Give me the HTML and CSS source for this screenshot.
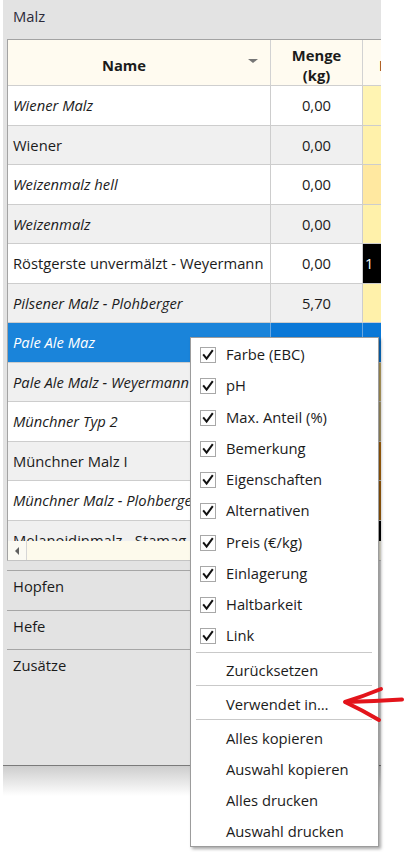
FILE: index.html
```html
<!DOCTYPE html>
<html lang="de">
<head>
<meta charset="utf-8">
<title>Malz</title>
<link rel="stylesheet" href="styles.css">
</head>
<body>
<div class="window">
  <div class="group-title">Malz</div>
  <div class="grid">
    <div class="head">
      <div class="hcell h-name"><span>Name</span><span class="sort"></span></div>
      <div class="hcell h-qty"><span>Menge<br>(kg)</span></div>
      <div class="hcell h-col3"><span>Farbe</span></div>
    </div>
    <div class="rows">
      <div class="row"><div class="cell c-name it">Wiener Malz</div><div class="cell c-qty">0,00</div><div class="cell c-col3 ebc-a"></div></div>
      <div class="row alt"><div class="cell c-name">Wiener</div><div class="cell c-qty">0,00</div><div class="cell c-col3 ebc-b"></div></div>
      <div class="row"><div class="cell c-name it">Weizenmalz hell</div><div class="cell c-qty">0,00</div><div class="cell c-col3 ebc-c"></div></div>
      <div class="row alt"><div class="cell c-name it">Weizenmalz</div><div class="cell c-qty">0,00</div><div class="cell c-col3 ebc-b"></div></div>
      <div class="row"><div class="cell c-name">Röstgerste unvermälzt - Weyermann</div><div class="cell c-qty">0,00</div><div class="cell c-col3 ebc-black">1</div></div>
      <div class="row alt"><div class="cell c-name it">Pilsener Malz - Plohberger</div><div class="cell c-qty">5,70</div><div class="cell c-col3 ebc-b"></div></div>
      <div class="row sel"><div class="cell c-name it">Pale Ale Maz</div><div class="cell c-qty">5,00</div><div class="cell c-col3"></div></div>
      <div class="row alt"><div class="cell c-name it">Pale Ale Malz - Weyermann</div><div class="cell c-qty">0,00</div><div class="cell c-col3 ebc-d"></div></div>
      <div class="row"><div class="cell c-name it">Münchner Typ 2</div><div class="cell c-qty">0,00</div><div class="cell c-col3 ebc-e"></div></div>
      <div class="row alt"><div class="cell c-name">Münchner Malz I</div><div class="cell c-qty">0,00</div><div class="cell c-col3 ebc-f"></div></div>
      <div class="row"><div class="cell c-name it">Münchner Malz - Plohberger</div><div class="cell c-qty">0,00</div><div class="cell c-col3 ebc-g"></div></div>
      <div class="row alt"><div class="cell c-name">Melanoidinmalz - Stamag</div><div class="cell c-qty">0,00</div><div class="cell c-col3 ebc-black"></div></div>
    </div>
    <div class="hscroll">
      <div class="sbtn"><span class="tri-left"></span></div>
      <div class="track"></div>
    </div>
  </div>
  <div class="sections">
    <div class="section">Hopfen</div>
    <div class="section">Hefe</div>
    <div class="section">Zusätze</div>
  </div>
</div>
<div class="window-shadow"></div>

<div class="menu">
  <div class="mi check"><span class="cb"><svg viewBox="0 0 14 14"><path d="M2.8 7.2 L5.6 10.6 L11.2 3"/></svg></span>Farbe (EBC)</div>
  <div class="mi check"><span class="cb"><svg viewBox="0 0 14 14"><path d="M2.8 7.2 L5.6 10.6 L11.2 3"/></svg></span>pH</div>
  <div class="mi check"><span class="cb"><svg viewBox="0 0 14 14"><path d="M2.8 7.2 L5.6 10.6 L11.2 3"/></svg></span>Max. Anteil (%)</div>
  <div class="mi check"><span class="cb"><svg viewBox="0 0 14 14"><path d="M2.8 7.2 L5.6 10.6 L11.2 3"/></svg></span>Bemerkung</div>
  <div class="mi check"><span class="cb"><svg viewBox="0 0 14 14"><path d="M2.8 7.2 L5.6 10.6 L11.2 3"/></svg></span>Eigenschaften</div>
  <div class="mi check"><span class="cb"><svg viewBox="0 0 14 14"><path d="M2.8 7.2 L5.6 10.6 L11.2 3"/></svg></span>Alternativen</div>
  <div class="mi check"><span class="cb"><svg viewBox="0 0 14 14"><path d="M2.8 7.2 L5.6 10.6 L11.2 3"/></svg></span>Preis (€/kg)</div>
  <div class="mi check"><span class="cb"><svg viewBox="0 0 14 14"><path d="M2.8 7.2 L5.6 10.6 L11.2 3"/></svg></span>Einlagerung</div>
  <div class="mi check"><span class="cb"><svg viewBox="0 0 14 14"><path d="M2.8 7.2 L5.6 10.6 L11.2 3"/></svg></span>Haltbarkeit</div>
  <div class="mi check"><span class="cb"><svg viewBox="0 0 14 14"><path d="M2.8 7.2 L5.6 10.6 L11.2 3"/></svg></span>Link</div>
  <div class="sep"></div>
  <div class="mi plain">Zurücksetzen</div>
  <div class="sep"></div>
  <div class="mi plain">Verwendet in…</div>
  <div class="sep"></div>
  <div class="mi plain">Alles kopieren</div>
  <div class="mi plain">Auswahl kopieren</div>
  <div class="mi plain">Alles drucken</div>
  <div class="mi plain">Auswahl drucken</div>
</div>

<svg class="arrow" viewBox="0 0 64 42" width="64" height="42">
  <path d="M41 5 Q24 12 5 18 Q22 26 39 36"/>
  <path d="M6 18 Q34 17 62 15.5"/>
</svg>
</body>
</html>
```

FILE: styles.css
```css
html, body {
  margin: 0;
  padding: 0;
}
body {
  width: 404px;
  height: 852px;
  overflow: hidden;
  position: relative;
  background: #ffffff;
  font-family: "Open Sans", "Noto Sans", sans-serif;
  font-size: 14.75px;
  color: #1b1b1b;
}

.window {
  margin-left: 3px;
  width: 378px;
  height: 766px;
  box-sizing: border-box;
  background: #e3e3e3;
  border-bottom: 1px solid #7a7a7a;
  display: flex;
  flex-direction: column;
  overflow: hidden;
}
.window-shadow {
  margin-left: 3px;
  width: 378px;
  height: 30px;
  background: linear-gradient(#cdcdcd, rgba(255, 255, 255, 0));
}

.group-title {
  height: 39px;
  flex: none;
  padding-left: 10px;
  line-height: 32px;
  color: #2c2a3a;
}

.grid {
  flex: none;
  margin-left: 4px;
  width: 374px;
  background: #ffffff;
  border-left: 1px solid #a3a3a3;
  border-top: 1px solid #a3a3a3;
  border-bottom: 1px solid #c4c4c4;
  overflow: hidden;
}

.head {
  display: flex;
  height: 46px;
  box-sizing: border-box;
  border-bottom: 1px solid #cfcfcf;
  background: #fffbf0;
}
.hcell {
  flex: none;
  box-sizing: border-box;
  border-right: 1px solid #d2d2d2;
  display: flex;
  align-items: center;
  justify-content: center;
  padding-top: 4px;
  font-weight: 700;
  line-height: 20px;
  text-align: center;
  color: #1b1b1b;
}
.h-name {
  width: 263px;
  padding-right: 30px;
  padding-top: 5px;
  position: relative;
}
.sort {
  position: absolute;
  left: 240px;
  top: 19px;
  width: 0;
  height: 0;
  border-left: 5px solid transparent;
  border-right: 5px solid transparent;
  border-top: 4px solid #767676;
}
.h-qty {
  width: 92px;
}
.h-col3 {
  width: 120px;
  justify-content: flex-start;
  padding-left: 16px;
}

.rows {
  height: 455px;
  overflow: hidden;
}
.row {
  display: flex;
  height: 39.5px;
  box-sizing: border-box;
  border-bottom: 1px solid #cdcdcd;
  background: #ffffff;
}
.row.alt {
  background: #f0f0f0;
}
.cell {
  flex: none;
  box-sizing: border-box;
  border-right: 1px solid #cdcdcd;
  display: flex;
  align-items: center;
  white-space: nowrap;
  overflow: hidden;
}
.c-name {
  width: 263px;
  padding-left: 5px;
}
.it {
  font-style: italic;
}
.c-qty {
  width: 92px;
  justify-content: center;
}
.c-col3 {
  width: 120px;
  padding-left: 2px;
}
.ebc-a { background: #fff4b2; }
.ebc-b { background: #fff1aa; }
.ebc-c { background: #ffe8a0; }
.ebc-d { background: #c8b16a; }
.ebc-e { background: #b9a874; }
.ebc-f { background: #b36b0c; }
.ebc-g { background: #a8640c; }
.ebc-black { background: #000000; color: #ffffff; }

.row.sel {
  background: #0a78d7;
  color: #ffffff;
}
.row.sel .cell {
  border-right-color: #6aa8e2;
}
.row.sel .c-name {
  background: #1a84da;
}

.hscroll {
  display: flex;
  height: 19px;
  background: #fdfaec;
}
.sbtn {
  width: 19px;
  box-sizing: border-box;
  border-right: 1px solid #d6d6d6;
  background: #fbfaf3;
  display: flex;
  align-items: center;
  justify-content: center;
}
.tri-left {
  width: 0;
  height: 0;
  border-top: 4px solid transparent;
  border-bottom: 4px solid transparent;
  border-right: 4px solid #606060;
}
.track {
  flex: 1;
}

.sections {
  margin-top: 9px;
}
.section {
  margin-left: 4px;
  width: 370px;
  height: 39.5px;
  box-sizing: border-box;
  border-top: 1px solid #a6a6a6;
  padding: 4px 0 0 6px;
  line-height: 22px;
  color: #1b1b1b;
}

.menu {
  position: absolute;
  left: 190px;
  top: 337px;
  width: 189px;
  box-sizing: border-box;
  border: 1px solid #9c9c9c;
  background: #ffffff;
  box-shadow: 2px 2px 3px rgba(0, 0, 0, 0.35);
  display: flex;
  flex-direction: column;
}
.mi {
  flex: none;
  height: 31.25px;
  box-sizing: border-box;
  display: flex;
  align-items: center;
  padding-top: 1px;
  color: #1b1b1b;
  white-space: nowrap;
}
.mi.check {
  padding-left: 9px;
}
.mi.plain {
  padding-left: 35px;
  padding-top: 3px;
}
.cb {
  width: 16px;
  height: 16px;
  box-sizing: border-box;
  border: 1px solid #a8a8a8;
  background: #ffffff;
  margin-right: 10px;
  margin-top: 2px;
  display: flex;
  align-items: center;
  justify-content: center;
}
.cb svg {
  width: 14px;
  height: 14px;
}
.cb path {
  fill: none;
  stroke: #111111;
  stroke-width: 2;
  stroke-linecap: square;
  stroke-linejoin: miter;
}
.sep {
  flex: none;
  height: 1px;
  background: #c9c9c9;
  margin: 1px 6px 0.5px 5px;
}

.arrow {
  position: absolute;
  left: 340px;
  top: 684px;
  pointer-events: none;
}
.arrow path {
  fill: none;
  stroke: #e3141b;
  stroke-width: 4;
  stroke-linecap: round;
  stroke-linejoin: round;
}
```
